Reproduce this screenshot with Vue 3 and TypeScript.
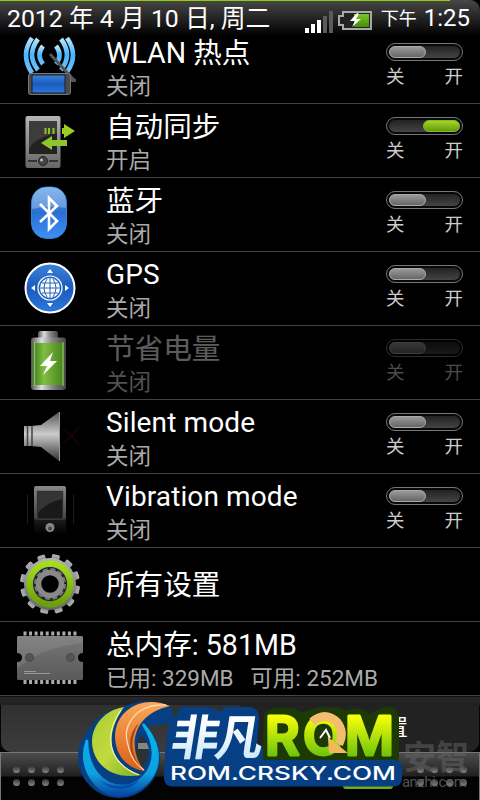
<template>
  <div class="screen">
    <header class="status-bar">
      <span class="date">2012 年 4 月 10 日, 周二</span>
      <svg class="signal" width="29" height="23" viewBox="0 0 29 23">
        <rect v-for="(bar, i) in signalBars" :key="i" :x="i * 6" :y="22 - bar.height" width="4" :height="bar.height"
          :fill="bar.on ? '#fff' : '#5b5b5b'" />
      </svg>
      <svg class="battery" width="35" height="20" viewBox="0 0 35 20">
        <path d="M5 1H33V18H5V14H1V5H5Z" fill="#222" stroke="#aaa" stroke-width="2" />
        <rect x="16" y="3" width="15" height="13" fill="url(#cell)" />
        <path d="M19 2L12 10H17L14 16L23 8H18L21 3Z" fill="#fff" />
      </svg>
      <span class="meridiem">下午</span>
      <span class="clock">1:25</span>
    </header>

    <main class="list">
      <div v-for="row in rows" :key="row.id" class="row" :class="{ disabled: row.disabled }">
        <svg class="icon" width="106" height="73" viewBox="0 0 106 73">
          <g v-if="row.id === 'hotspot'">
            <g fill="none" stroke="url(#wave)" stroke-width="4.600">
              <path d="M32 8Q20 25 32 43" />
              <path d="M38 9Q26 25 38 40" />
              <path d="M43 16Q36 25 43 34" />
              <path d="M67 8Q79 25 67 42" />
              <path d="M61 9Q73 25 61 40" />
              <path d="M56 16Q63 25 56 34" />
            </g>
            <path d="M50 24L73 49" stroke="#555" stroke-width="3" />
            <path d="M69 46L76 49V52H70Z" fill="#555" />
            <rect x="28.500" y="43.500" width="42" height="21" rx="2" fill="#4b4b4b" stroke="#777" />
            <rect x="32" y="45" width="33" height="18" fill="url(#blue)" stroke="#123" />
          </g>
          <g v-else-if="row.id === 'sync'">
            <rect x="25.500" y="12" width="35" height="52" rx="2" fill="url(#metal)" />
            <rect x="29" y="17" width="28" height="33" fill="#222" />
            <path d="M29 45Q34 34 57 29V17H29Z" fill="#3c3c3c" />
            <path d="M28 57H37M49 57H58" stroke="#333" stroke-width="2" />
            <circle cx="43" cy="57" r="4.500" fill="#444" stroke="#222" />
            <circle cx="41.500" cy="56" r="1.500" fill="#bbb" />
            <path d="M45.500 24V30M49 24V30M53.500 24V30" stroke="#8fc41a" stroke-width="2" />
            <path d="M62 24H64V20L75 27L64 34V30H62Z" fill="#99cf24" />
            <path d="M41 39L52 32V36H67V42H52V46Z" fill="#8ec52c" />
          </g>
          <g v-else-if="row.id === 'bluetooth'">
            <rect x="31.500" y="9" width="35" height="51.500" rx="15" fill="url(#blueLight)" stroke="#2c87dc" />
            <path d="M32 31V25Q32 9 49 9Q66 9 66 25V30Q50 27 32 31Z" fill="#fff" opacity=".25" />
            <path d="M40 26L57 43L49 51V20L57 28L40 44" fill="none" stroke="#fff" stroke-width="2.600"
              stroke-linejoin="miter" />
          </g>
          <g v-else-if="row.id === 'gps'" stroke="#fff" fill="none">
            <circle cx="50" cy="36" r="24.500" fill="url(#blue)" stroke-width="2" />
            <circle cx="50" cy="36" r="12" stroke-width="1.200" />
            <circle cx="50" cy="36" r="10" fill="#fff" stroke="none" />
            <path d="M50 26V46M40 36H60M42 31H58M42 41H58M47 27Q41 36 47 45M53 27Q59 36 53 45" stroke="#2464bb"
              stroke-width="1" />
            <g fill="#fff" stroke="none">
              <path d="M50 17L53 21H47ZM50 55L53 51H47ZM31 36L35 33V39ZM69 36L65 33V39Z" />
            </g>
          </g>
          <g v-else-if="row.id === 'power'">
            <rect x="38" y="5" width="20" height="9" rx="2.500" fill="url(#steel)" />
            <rect x="31" y="11.500" width="35" height="52.500" rx="3" fill="url(#steel)" />
            <rect x="33" y="17" width="31" height="42" fill="url(#cellWide)" />
            <path d="M34.500 16V60M63 16V60" stroke="#bcd3a1" stroke-width="1.200" opacity=".7" />
            <path d="M53 26L40 40H47L43 49L57 35H50Z" fill="#fff" />
          </g>
          <g v-else-if="row.id === 'silent'">
            <path d="M24 26H31L41 25L59 12V61L41 47L31 46H24Z" fill="url(#speaker)" />
            <path d="M27.500 26V46M32 26V46" stroke="#444" stroke-width="1.500" />
            <path d="M59.500 12V61" stroke="#999" />
            <path d="M63 28L79 44M79 28L63 44" stroke="#140302" stroke-width="2" />
          </g>
          <g v-else-if="row.id === 'vibration'">
            <rect x="34" y="12" width="32" height="49" rx="2" fill="url(#darkPhone)" />
            <rect x="37" y="17" width="26" height="28" fill="#191919" stroke="#555" stroke-width=".7" />
            <path d="M37.500 40Q44 29 62.500 25V17.500H37.500Z" fill="#353535" />
            <circle cx="50" cy="53.500" r="4.500" fill="#888" />
            <circle cx="50" cy="54.500" r="2" fill="#444" />
            <path d="M27.500 20V50M73.500 20V50" stroke="#1c1c1c" />
          </g>
          <g v-else-if="row.id === 'settings'">
            <g fill="url(#metal)">
              <rect v-for="n in 12" :key="n" x="46" y="6" width="8" height="10" rx="1.500"
                :transform="`rotate(${n * 30 + 12} 50 36)`" />
            </g>
            <circle cx="50" cy="36" r="26" fill="url(#metal)" />
            <circle cx="50" cy="36" r="20.500" fill="none" stroke="url(#lime)" stroke-width="6" />
            <circle cx="50" cy="36" r="17" fill="#222" />
            <circle cx="50" cy="36" r="15" fill="none" stroke="#777" stroke-width="2" stroke-dasharray="5 2.850" />
            <circle cx="50" cy="36" r="11.500" fill="#000" stroke="#898989" stroke-width="5.500" />
          </g>
          <g v-else>
            <path d="M23.500 11.500H77M23.500 60H77" stroke="#aaa" stroke-width="4" stroke-dasharray="3 2.550" />
            <path d="M18 14H82L83 15V31Q78 31 78 35.500Q78 40 83 40V57L82 58H18L17 57V40Q22 40 22 35.500Q22 31 17 31V15Z"
              fill="url(#chip)" />
            <path d="M17 47Q39 27 76 22L83 21V15L82 14H18L17 15V31Q22 31 22 35.500Q22 40 17 40Z" fill="#fff"
              opacity=".09" />
            <circle cx="29.500" cy="35.500" r="4" fill="#555" stroke="#484848" />
            <circle cx="70.500" cy="35.500" r="4" fill="#555" stroke="#484848" />
            <path d="M24 49.500H36M24 51.500H50" stroke="#aaa" stroke-width=".8" />
          </g>
        </svg>
        <div class="text">
          <div class="title" :class="{ latin: row.latin }">{{ row.title }}</div>
          <div v-if="row.summary" class="summary">{{ row.summary }}</div>
        </div>
        <div v-if="row.on !== undefined" class="toggle">
          <div class="track" :class="{ on: row.on }">
            <div class="knob"></div>
          </div>
          <div class="labels"><span>关</span><span>开</span></div>
        </div>
      </div>
    </main>

    <footer class="bottom">
      <div class="tabs">
        <div class="tab active"></div>
        <div class="tab"><span>设置</span></div>
      </div>
      <div class="handle">
        <div class="dots"><i v-for="n in 8" :key="n"></i></div>
        <div class="dots"><i v-for="n in 8" :key="n"></i></div>
      </div>
    </footer>

    <svg class="brand" width="405" height="110" viewBox="75 690 405 110">
      <defs>
        <linearGradient id="wave" x1="0" y1="0" x2="0" y2="1">
          <stop offset="0" stop-color="#b5e8ff" />
          <stop offset=".5" stop-color="#49b2ff" />
          <stop offset="1" stop-color="#6cc4ff" />
        </linearGradient>
        <linearGradient id="blue" x1="0" y1="0" x2="0" y2="1">
          <stop offset="0" stop-color="#3c83d8" />
          <stop offset=".5" stop-color="#1a5bbd" />
          <stop offset="1" stop-color="#2c78dc" />
        </linearGradient>
        <linearGradient id="blueLight" x1="0" y1="0" x2="0" y2="1">
          <stop offset="0" stop-color="#5fa0e6" />
          <stop offset=".5" stop-color="#2b6fd2" />
          <stop offset="1" stop-color="#3e90f5" />
        </linearGradient>
        <linearGradient id="metal" x1="0" y1="0" x2="0" y2="1">
          <stop offset="0" stop-color="#b5b5b5" />
          <stop offset="1" stop-color="#666" />
        </linearGradient>
        <linearGradient id="steel">
          <stop offset="0" stop-color="#555" />
          <stop offset=".3" stop-color="#ddd" />
          <stop offset=".6" stop-color="#888" />
          <stop offset="1" stop-color="#444" />
        </linearGradient>
        <linearGradient id="cell" x1="0" y1="0" x2="0" y2="1">
          <stop offset="0" stop-color="#7bc52c" />
          <stop offset="1" stop-color="#438f05" />
        </linearGradient>
        <linearGradient id="cellWide">
          <stop offset="0" stop-color="#3d8116" />
          <stop offset=".35" stop-color="#80bd43" />
          <stop offset="1" stop-color="#428317" />
        </linearGradient>
        <linearGradient id="speaker" x1="0" y1="0" x2="0" y2="1">
          <stop offset="0" stop-color="#555" />
          <stop offset=".45" stop-color="#ccc" />
          <stop offset="1" stop-color="#333" />
        </linearGradient>
        <linearGradient id="darkPhone" x1="0" y1="0" x2="0" y2="1">
          <stop offset="0" stop-color="#888" />
          <stop offset=".65" stop-color="#444" />
          <stop offset=".7" stop-color="#1a1a1a" />
          <stop offset="1" stop-color="#000" />
        </linearGradient>
        <linearGradient id="lime" x1="0" y1="0" x2="0" y2="1">
          <stop offset="0" stop-color="#a5df18" />
          <stop offset="1" stop-color="#6ba006" />
        </linearGradient>
        <linearGradient id="chip" x1="0" y1="0" x2="0" y2="1">
          <stop offset="0" stop-color="#777" />
          <stop offset="1" stop-color="#5a5a5a" />
        </linearGradient>
        <linearGradient id="letters" x1="0" y1="0" x2="0" y2="1">
          <stop offset=".2" stop-color="#f5ff08" />
          <stop offset=".8" stop-color="#70c40c" />
        </linearGradient>
        <linearGradient id="ice" x1="0" y1="0" x2="0" y2="1">
          <stop offset=".3" stop-color="#fff" />
          <stop offset="1" stop-color="#bfe3f8" />
        </linearGradient>
        <linearGradient id="leaf" x1="0" y1="0" x2="1" y2="1">
          <stop offset="0" stop-color="#a8cc30" />
          <stop offset=".5" stop-color="#c3da3e" />
          <stop offset="1" stop-color="#75ad25" />
        </linearGradient>
        <linearGradient id="flame" x1="0" y1="0" x2="0" y2="1">
          <stop offset="0" stop-color="#fba85a" />
          <stop offset="1" stop-color="#d95f16" />
        </linearGradient>
        <linearGradient id="sea" x1="0" y1="0" x2="0" y2="1">
          <stop offset="0" stop-color="#08b5ec" />
          <stop offset=".7" stop-color="#0fa0dd" />
          <stop offset="1" stop-color="#0648a5" />
        </linearGradient>
      </defs>

      <text class="cjk-heavy" x="403" y="769" font-size="33" textLength="66" fill="#666" opacity=".5">安智</text>
      <text class="sans" x="402" y="787" font-size="15" textLength="65" fill="#666" opacity=".8">anzhi.com</text>
      <rect x="343" y="781" width="50" height="8" rx="3" fill="#75aa12" />

      <!-- dark plates behind the lettering -->
      <path d="M267 716Q270 711 277 711H289Q297 711 302 717Q312 710 325 710Q338 710 347 714Q355 709 363 713L370 717
        L380 712Q395 706 396 718V757Q395 765 386 764H275Q265 765 265 755Z" fill="#1d3a05" stroke="#1d3a05"
        stroke-width="6" stroke-linejoin="round" />
      <path d="M182 710H206L214 712L220 716L226 710H250Q256 711 256 718L254 744L260 750V768H168V752L170 735L173 722
        L179 718Z" fill="#063f84" stroke="#063f84" stroke-width="6" stroke-linejoin="round" />
      <rect x="164" y="760" width="238" height="26.500" rx="8" fill="#063f84" />

      <!-- swirl -->
      <circle cx="119" cy="757" r="41" fill="#063f84" />
      <path d="M92 732Q103 714 123 713Q140 702 160 708Q172 711 168 719L144 722L119 760L91 760Z" fill="#063f84"
        stroke="#063f84" stroke-width="9" stroke-linejoin="round" />
      <path d="M141 735C149 741 152 758 142 768C134 757 135 744 141 735Z" fill="#2c3136" />
      <path d="M138 743H147L149 749H138Z" fill="#aaa" opacity=".7" />
      <path d="M87 740C77 768 97 795 119 795C153 793 173 756 143 724C165 758 146 785 123 786C102 786 87 768 87 740Z"
        fill="url(#sea)" stroke="url(#sea)" stroke-width="2.500" />
      <path d="M99 780Q119 792 140 780Q121 798 99 780Z" fill="#074aa7" />
      <path d="M124 707C98 711 83 738 98 761Q112 780 142 775C110 766 102 738 124 707Z" fill="url(#leaf)" />
      <path d="M121 710C102 737 110 764 139 775" fill="none" stroke="#f3f4ae" stroke-width="1.200" />
      <path d="M170 706C145 695 116 708 115 736C115 760 133 770 145 771C128 752 129 715 170 706Z"
        fill="url(#flame)" />
      <path d="M166 705C134 704 122 727 128 745Q131 761 144 770" fill="none" stroke="#ffe0b4" stroke-width="1.200" />
      <path d="M139 723C127 743 133 760 143 770C130 758 124 738 139 723Z" fill="#a64212" />

      <text class="cjk-heavy" transform="translate(168 755) skewX(-9)" x="1" y="0" font-size="48" textLength="92"
        fill="url(#ice)">非凡</text>
      <text class="inter rom" x="265 303 345" y="755" font-size="53" fill="url(#letters)" stroke="url(#letters)"
        stroke-width="3" stroke-linejoin="round">ROM</text>
      <path d="M312 722Q325 711 337 722Q345 732 339 744" fill="none" stroke="#f2bd70" stroke-width="8.500" />
      <path d="M329 739L345 752L330 752Z" fill="#f3b85b" stroke="#f3b85b" stroke-width="2" />
      <path d="M320 738L326 730L330 738" fill="none" stroke="#fff" stroke-width="2" />
      <text class="inter domain" x="170" y="780" font-size="19" textLength="226" lengthAdjust="spacingAndGlyphs"
        fill="#fff">ROM.CRSKY.COM</text>
    </svg>
  </div>
</template>

<script setup lang="ts">
interface Row {
  id: string;
  title: string;
  summary?: string;
  on?: boolean;
  disabled?: boolean;
  latin?: boolean;
}

const rows: Row[] = [
  { id: 'hotspot', title: 'WLAN 热点', summary: '关闭', on: false },
  { id: 'sync', title: '自动同步', summary: '开启', on: true },
  { id: 'bluetooth', title: '蓝牙', summary: '关闭', on: false },
  { id: 'gps', title: 'GPS', summary: '关闭', on: false, latin: true },
  { id: 'power', title: '节省电量', summary: '关闭', on: false, disabled: true },
  { id: 'silent', title: 'Silent mode', summary: '关闭', on: false, latin: true },
  { id: 'vibration', title: 'Vibration mode', summary: '关闭', on: false, latin: true },
  { id: 'settings', title: '所有设置' },
  { id: 'memory', title: '总内存: 581MB', summary: '已用: 329MB   可用: 252MB' },
];

const signalBars = [
  { height: 5, on: true },
  { height: 9, on: true },
  { height: 13, on: true },
  { height: 17, on: false },
  { height: 22, on: false },
];
</script>

<style>
body {
  background: #000;
}
</style>

<style scoped>
.screen {
  position: relative;
  width: 480px;
  height: 800px;
  overflow: hidden;
  background: #000;
  color: #fff;
  font-family: Roboto, 'Noto Sans CJK SC', sans-serif;
}

.status-bar {
  display: flex;
  box-sizing: border-box;
  height: 38px;
  padding: 0 10px 0 7px;
  background: linear-gradient(#8fce0b, #8fce0b) 0 0 / 450px 1px no-repeat, linear-gradient(#484848, #000 36px);
  border-radius: 0 10px 0 0;
  line-height: 37px;
  white-space: nowrap;
}

.date {
  width: 298px;
  font-size: 24.8px;
}

.signal {
  margin-top: 11px;
}

.battery {
  margin: 11px 0 0 4px;
}

.meridiem {
  width: 43px;
  margin-left: 8px;
  font-size: 18px;
}

.clock {
  font-size: 24px;
}

.list {
  margin-top: -8px;
}

.row {
  display: flex;
  box-sizing: border-box;
  height: 74px;
  padding-right: 17px;
  border-bottom: 1px solid #444;
}

.icon {
  flex: none;
}

.text {
  display: flex;
  flex: 1;
  flex-direction: column;
  justify-content: center;
  white-space: pre;
}

.title {
  font-size: 28.6px;
  line-height: 44px;
}

.title.latin {
  font-size: 28px;
  letter-spacing: 0.12px;
}

.summary {
  margin-top: -1px;
  margin-bottom: 5px;
  color: #aaa;
  font-size: 22.5px;
  line-height: 24px;
}

.toggle {
  width: 77px;
  padding-top: 13px;
}

.track {
  display: flex;
  box-sizing: border-box;
  height: 18px;
  padding: 2px;
  border: 1px solid #777;
  border-radius: 9px;
  background: linear-gradient(#222, #444) content-box, #080808;
}

.knob {
  box-sizing: border-box;
  width: 37px;
  height: 12px;
  border: 1px solid #aaa;
  border-radius: 6px;
  background: linear-gradient(#999, #666);
}

.track.on {
  justify-content: flex-end;
}

.on .knob {
  border-color: #86bd1b;
  background: linear-gradient(#a4d52a, #659b0c);
}

.labels {
  display: flex;
  justify-content: space-between;
  margin-top: 4px;
  color: #ccc;
  font-size: 18.5px;
  line-height: 24px;
}

.disabled .title,
.disabled .toggle {
  opacity: 0.36;
}

.disabled .summary {
  opacity: 0.48;
}

.bottom {
  height: 104px;
}

.tabs {
  display: flex;
  box-sizing: border-box;
  height: 56px;
  padding: 8px 1px 0;
  border-top: 1px solid #111;
  background: linear-gradient(#272727, #202020 8px, #050505 8px);
}

.tab {
  flex: 1;
  border-radius: 0 0 10px 10px;
  background: #222;
  font-size: 22px;
  line-height: 46px;
  text-align: right;
}

.tab span {
  margin-right: 71px;
}

.tab.active {
  background: linear-gradient(#303030, #3c3c3c);
}

.handle {
  display: flex;
  justify-content: space-between;
  box-sizing: border-box;
  height: 48px;
  padding: 13px 12px;
  border: 1px solid #777;
  border-bottom: 0;
  background: linear-gradient(#4c4c4c, #202020 23px, #030303 24px);
}

.dots {
  display: grid;
  grid-template-columns: repeat(4, 7px);
  grid-auto-rows: 7px;
  gap: 6px 7.500px;
}

.dots i {
  border-radius: 50%;
  background: linear-gradient(#333, #888);
}

.brand {
  position: absolute;
  top: 690px;
  left: 75px;
}

.cjk-heavy {
  font-family: 'Noto Sans CJK SC', sans-serif;
  font-weight: 700;
}

.sans {
  font-family: Roboto, sans-serif;
}

.inter {
  font-family: Inter, sans-serif;
}

.rom {
  font-weight: 600;
}

.domain {
  font-weight: 500;
}
</style>
